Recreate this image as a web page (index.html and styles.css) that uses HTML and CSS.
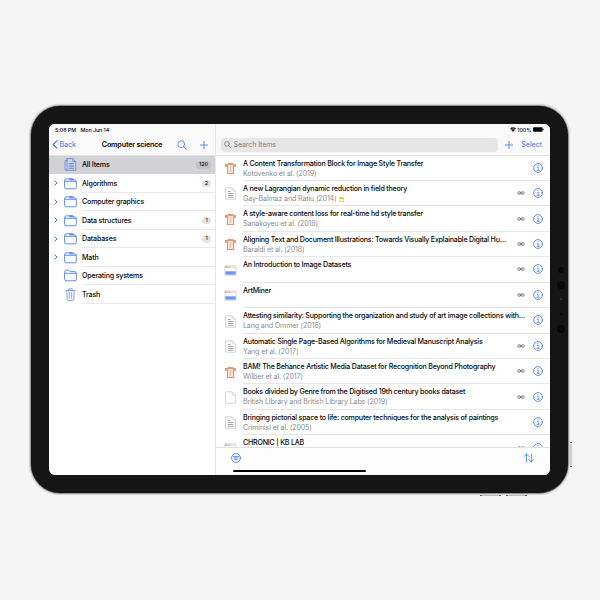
FILE: index.html
```
<!DOCTYPE html>
<html lang="en">
<head>
<meta charset="utf-8">
<title>Library</title>
<link rel="stylesheet" href="styles.css">
</head>
<body>
<svg class="defs" width="0" height="0" aria-hidden="true">
  <symbol id="folder" viewBox="0 0 13 13"><path d="M.8 4.2V2.5Q.8 1.2 2 1.2h2.6l1.4 1.4h4.8q1.2 0 1.2 1.2v.4M.7 4.3h11.6v6.2q0 1.3-1.3 1.3H2Q.7 11.8.7 10.5z"/></symbol>
  <symbol id="folders" viewBox="0 0 13 13"><path d="M.8 4.3V3Q.8 1.9 2 1.9h2.6l1.3 1h5q1.1 0 1.1 1.4M.7 4.3h11.6v6.2q0 1.3-1.3 1.3H2Q.7 11.8.7 10.5z"/><path d="M4.2 1h4.3l2 1.9H6.6z" fill="#6a93f0" stroke="none"/></symbol>
  <symbol id="allitems" viewBox="0 0 13 13"><path d="M3 .6h5.8l3 3v8.8H2.4Q1 12.4 1 11V2.6h2M3 .6v10.6q0 1.2-.8 1.2M8.8.8v2.8h2.8M5 5.4h4.8M5 7.1h4.8M5 8.8h4.8M5 10.5h4.8" stroke-width=".65"/></symbol>
  <symbol id="trash" viewBox="0 0 13 13"><path d="M2 2.5h9M4.8 2.3V.8h3.4v1.5M2.8 2.6l.4 8.7q.1 1.1 1 1.1h4.6q.9 0 1-1.1l.4-8.7M5.3 4.5v6M7.7 4.5v6" stroke-width=".7"/></symbol>
  <symbol id="chev" viewBox="0 0 4 6"><path d="M.8.8L3 3 .8 5.2"/></symbol>
  <symbol id="plus" viewBox="0 0 8 8"><path d="M4 .2v7.6M.2 4h7.6"/></symbol>
  <symbol id="search" viewBox="0 0 10 10"><circle cx="4.2" cy="4.2" r="3.4"/><path d="M6.7 6.7l2.7 2.7"/></symbol>
  <symbol id="artwork" viewBox="0 0 13 13"><path d="M1 2h2.6V1h5.8v1H12v3H1z" fill="#e59a78"/><path d="M3 5h1.1v6H3zM8.9 5H10v6H8.9zM2.8 11h7.4v1.1H2.8z" fill="#e39673"/><path d="M4.1 3h4.8v8H4.1z" fill="#fae4da"/><path d="M6 4h1v6H6z" fill="#efb9a0"/></symbol>
  <symbol id="paper" viewBox="0 0 13 13"><path d="M1.6.8h6.6l3.2 3.2v8.2H1.6z" fill="#fff" stroke="#c6c6c6" stroke-width=".8"/><path d="M8.2.8V4h3.2" fill="none" stroke="#ccc" stroke-width=".6"/><path d="M3.8 4.5h2.7M3.8 6.5h5.6M3.8 8.5h5.6M3.8 10.3h5.6" stroke="#888" stroke-width=".75"/></symbol>
  <symbol id="book" viewBox="0 0 13 13"><path d="M1.6.8h6.6l3.2 3.2v8.2H1.6zM8.2.8V4h3.2" fill="#fff" stroke="#cacaca" stroke-width=".8"/></symbol>
  <symbol id="web" viewBox="0 0 13 13"><path d="M.9 1.8h11.2v9.8H.9z" fill="#fff" stroke="#d4d4d4" stroke-width=".8"/><path d="M6 2.2h5.7v2H6z" fill="#e3e3e3"/><path d="M1.2 2.3h1.5v1.6H1.2z" fill="#f2857e"/><path d="M2.9 2.3h1.5v1.6H2.9z" fill="#f1c876"/><path d="M4.6 2.3h1.5v1.6H4.6z" fill="#8ad481"/><path d="M1.3 7.3h10.4v3.4H1.3z" fill="#6c98f5"/></symbol>
  <symbol id="info" viewBox="0 0 10 10"><circle cx="5" cy="5" r="4.4"/><path d="M4.2 4.4h1v2.9M4 7.3h2.2M4.8 2.7h.5" stroke-width=".75"/></symbol>
  <symbol id="links" viewBox="0 0 8 4"><circle cx="2.3" cy="2" r="1.45"/><circle cx="5.7" cy="2" r="1.45"/><path d="M1.8 2h4.4"/></symbol>
</svg>

<div class="scene">
<div class="device">
  <div class="screen">
    <aside class="sidebar">
      <div class="status">5:08 PM<span>Mon Jun 14</span></div>
      <div class="nav">
        <a class="back"><svg class="ic" width="6" height="9" viewBox="0 0 6 9"><path d="M4.9.8L1.2 4.5l3.7 3.7" stroke-width="1.2"/></svg>Back</a>
        <h1>Computer science</h1>
        <svg class="ic find" width="10" height="10"><use href="#search"/></svg>
        <svg class="ic" width="8" height="8"><use href="#plus"/></svg>
      </div>
      <ul class="folders">
        <li class="active"><i></i><svg class="ic" width="13" height="13"><use href="#allitems"/></svg><div>All Items<b>120</b></div></li>
        <li><svg class="ic chev" width="4" height="6"><use href="#chev"/></svg><svg class="ic" width="13" height="13"><use href="#folders"/></svg><div>Algorithms<b>2</b></div></li>
        <li><svg class="ic chev" width="4" height="6"><use href="#chev"/></svg><svg class="ic" width="13" height="13"><use href="#folders"/></svg><div>Computer graphics</div></li>
        <li><svg class="ic chev" width="4" height="6"><use href="#chev"/></svg><svg class="ic" width="13" height="13"><use href="#folders"/></svg><div>Data structures<b>1</b></div></li>
        <li><svg class="ic chev" width="4" height="6"><use href="#chev"/></svg><svg class="ic" width="13" height="13"><use href="#folders"/></svg><div>Databases<b>1</b></div></li>
        <li><svg class="ic chev" width="4" height="6"><use href="#chev"/></svg><svg class="ic" width="13" height="13"><use href="#folders"/></svg><div>Math</div></li>
        <li><i></i><svg class="ic" width="13" height="13"><use href="#folder"/></svg><div>Operating systems</div></li>
        <li><i></i><svg class="ic" width="13" height="13"><use href="#trash"/></svg><div>Trash</div></li>
      </ul>
    </aside>
    <main class="library">
      <div class="status right">
        <svg width="6" height="5" viewBox="0 0 6 5"><path d="M0 1.6Q3-1 6 1.6L3 5z" fill="#222"/><path d="M.9 2.5Q3 .8 5.1 2.5" fill="none" stroke="#fff" stroke-width=".4"/></svg>
        <em>100%</em>
        <svg width="11" height="5" viewBox="0 0 11 5"><rect width="9.6" height="4.6" y=".2" rx="1.1"/><path d="M10.1 1.7h.6v1.6h-.6z"/></svg>
      </div>
      <div class="nav">
        <div class="search"><svg class="ic" width="7" height="7" viewBox="0 0 10 10"><circle cx="4.2" cy="4.2" r="3.4"/><path d="M6.7 6.7l2.7 2.7"/></svg>Search Items</div>
        <svg class="ic" width="8" height="8"><use href="#plus"/></svg>
        <a>Select</a>
      </div>
      <div class="items">
        <article><svg width="13" height="13"><use href="#artwork"/></svg><div class="body"><div class="text"><h2>A Content Transformation Block for Image Style Transfer</h2><p>Kotovenko et al. (2019)</p></div><svg class="ic info" width="10" height="10"><use href="#info"/></svg></div></article>
        <article><svg width="13" height="13"><use href="#paper"/></svg><div class="body"><div class="text"><h2>A new Lagrangian dynamic reduction in field theory</h2><p>Gay-Balmaz and Ratiu (2014)<span class="note"></span></p></div><svg class="link" width="8" height="4"><use href="#links"/></svg><svg class="ic info" width="10" height="10"><use href="#info"/></svg></div></article>
        <article><svg width="13" height="13"><use href="#artwork"/></svg><div class="body"><div class="text"><h2>A style-aware content loss for real-time hd style transfer</h2><p>Sanakoyeu et al. (2018)</p></div><svg class="link" width="8" height="4"><use href="#links"/></svg><svg class="ic info" width="10" height="10"><use href="#info"/></svg></div></article>
        <article><svg width="13" height="13"><use href="#artwork"/></svg><div class="body"><div class="text"><h2>Aligning Text and Document Illustrations: Towards Visually Explainable Digital Hu…</h2><p>Baraldi et al. (2018)</p></div><svg class="link" width="8" height="4"><use href="#links"/></svg><svg class="ic info" width="10" height="10"><use href="#info"/></svg></div></article>
        <article><svg width="13" height="13"><use href="#web"/></svg><div class="body"><div class="text"><h2>An Introduction to Image Datasets</h2></div><svg class="link" width="8" height="4"><use href="#links"/></svg><svg class="ic info" width="10" height="10"><use href="#info"/></svg></div></article>
        <article><svg width="13" height="13"><use href="#web"/></svg><div class="body"><div class="text"><h2>ArtMiner</h2></div><svg class="link" width="8" height="4"><use href="#links"/></svg><svg class="ic info" width="10" height="10"><use href="#info"/></svg></div></article>
        <article><svg width="13" height="13"><use href="#paper"/></svg><div class="body"><div class="text"><h2>Attesting similarity: Supporting the organization and study of art image collections with…</h2><p>Lang and Ommer (2018)</p></div><svg class="ic info" width="10" height="10"><use href="#info"/></svg></div></article>
        <article><svg width="13" height="13"><use href="#paper"/></svg><div class="body"><div class="text"><h2>Automatic Single Page-Based Algorithms for Medieval Manuscript Analysis</h2><p>Yang et al. (2017)</p></div><svg class="link" width="8" height="4"><use href="#links"/></svg><svg class="ic info" width="10" height="10"><use href="#info"/></svg></div></article>
        <article><svg width="13" height="13"><use href="#artwork"/></svg><div class="body"><div class="text"><h2>BAM! The Behance Artistic Media Dataset for Recognition Beyond Photography</h2><p>Wilber et al. (2017)</p></div><svg class="link" width="8" height="4"><use href="#links"/></svg><svg class="ic info" width="10" height="10"><use href="#info"/></svg></div></article>
        <article><svg width="13" height="13"><use href="#book"/></svg><div class="body"><div class="text"><h2>Books divided by Genre from the Digitised 19th century books dataset</h2><p>British Library and British Library Labs (2019)</p></div><svg class="link" width="8" height="4"><use href="#links"/></svg><svg class="ic info" width="10" height="10"><use href="#info"/></svg></div></article>
        <article><svg width="13" height="13"><use href="#paper"/></svg><div class="body"><div class="text"><h2>Bringing pictorial space to life: computer techniques for the analysis of paintings</h2><p>Criminisi et al. (2005)</p></div><svg class="ic info" width="10" height="10"><use href="#info"/></svg></div></article>
        <article><svg width="13" height="13"><use href="#web"/></svg><div class="body"><div class="text"><h2>CHRONIC | KB LAB</h2></div><svg class="link" width="8" height="4"><use href="#links"/></svg><svg class="ic info" width="10" height="10"><use href="#info"/></svg></div></article>
      </div>
      <div class="toolbar">
        <svg class="ic" width="10" height="10" viewBox="0 0 10 10"><circle cx="5" cy="5" r="4.4"/><path d="M2.3 3.6h5.4M3 5.1h4M4 6.6h2"/></svg>
        <svg class="ic" width="12" height="10" viewBox="0 0 12 10"><path d="M3.5 9V1M1 3.5L3.5 1 6 3.5M8.3 1v8M5.9 6.5L8.3 9l2.5-2.5"/></svg>
      </div>
    </main>
    <div class="home"></div>
  </div>
  <div class="sensors"><s></s><s class="big"></s><s class="lens"></s><s class="dot"></s><s class="big last"></s></div>
  <div class="power"></div>
  <div class="volume"><s></s><s></s></div>
</div>
</div>
</body>
</html>
```
FILE: styles.css
```
* { box-sizing: border-box; margin: 0; padding: 0; }
body {
  width: 600px; height: 600px; overflow: hidden;
  background: #f5f5f5; color: #080808;
  font-family: Inter, "Liberation Sans", sans-serif;
  font-size: 7px;
}
.defs { position: absolute; }
svg { display: block; flex: none; }
ul { list-style: none; }
.scene { padding: 106px 0 0 30.5px; }
.device {
  position: relative;
  width: 537px; height: 387px;
  padding: 18px 17.5px 18px 18px;
  border-radius: 29px;
  background: #151515;
  box-shadow: 0 0 0 .7px #777, 0 0 1px 1.8px #d5d5d5;
}
.screen {
  position: relative;
  display: flex;
  height: 351px;
  border-radius: 6px;
  overflow: hidden;
  background: #fff;
}
.ic { fill: none; stroke: #457af0; stroke-width: .85; stroke-linecap: round; stroke-linejoin: round; }
.sidebar { width: 167.5px; border-right: 1px solid #e6e6e6; }
.library { flex: 1; min-width: 0; display: flex; flex-direction: column; }
.status {
  height: 11px; padding: 0 0 0 6.5px;
  display: flex; align-items: center; gap: 4.5px;
  background: #f9f9f9; font-size: 5.4px; font-weight: 500; letter-spacing: -.1px;
}
.status.right { justify-content: flex-end; gap: 1.5px; padding-right: 6px; }
.status em { font-style: normal; }
.nav {
  height: 20.5px; display: flex; align-items: center;
  background: #f9f9f9; border-bottom: 1px solid #e2e2e2;
}
.nav a { color: #3f74f0; font-size: 7.2px; letter-spacing: -.08px; }
.sidebar .nav { padding: 0 7px 0 3px; }
.back { display: flex; align-items: center; gap: 2px; width: 50.3px; }
h1 { font-size: 7.2px; font-weight: 600; letter-spacing: -.19px; flex: 1; white-space: nowrap; }
.find { margin-right: 13.5px; }
.folders li { display: flex; align-items: center; height: 18.5px; padding-left: 5px; }
.folders i, .chev { width: 4px; margin-right: 6px; }
.folders .chev { stroke-width: 1; }
.folders div {
  flex: 1; height: 18.5px; margin-left: 5.5px; padding: 1px 4px 0 0;
  display: flex; align-items: center; justify-content: space-between;
  border-bottom: 1px solid #e9e9e9;
  font-size: 7.1px; font-weight: 450; letter-spacing: -.18px; white-space: nowrap;
}
.folders .active { background: #d1d1d6; }
.folders .active div { border-color: #d1d1d6; }
.folders b {
  min-width: 9px; height: 7.5px; padding: 0 3px; border-radius: 4px;
  background: #e3e3e5; font-size: 5.4px; line-height: 7.5px; font-weight: 500; text-align: center; letter-spacing: 0;
}
.folders .active b { background: #c2c2c7; }
.library .nav { padding: 0 8px 0 5px; }
.search {
  width: 276.5px; height: 14px; margin-right: 7.5px; padding-left: 3px;
  display: flex; align-items: center; gap: 2.5px;
  border-radius: 4px; background: #e6e6e8; color: #808084; font-size: 7px; letter-spacing: -.08px;
}
.search .ic { stroke: #77777b; stroke-width: 1.1; }
.library .nav a { margin-left: auto; }
.items { height: 291.3px; overflow: hidden; }
article { display: flex; height: 25.45px; padding-left: 8px; }
article > svg { margin-top: 6.5px; }
.body {
  flex: 1; min-width: 0; margin-left: 6px; padding-right: 6.7px; position: relative;
  display: flex; align-items: center;
  border-bottom: 1px solid #e7e7e7;
}
.text { flex: 1; min-width: 0; height: 25px; padding-top: 3.3px; white-space: nowrap; }
h2 { font-size: 7.1px; line-height: 10px; font-weight: 470; letter-spacing: -.21px; }
p { display: flex; align-items: center; font-size: 7.1px; line-height: 10.5px; color: #8b8b8e; letter-spacing: -.14px; }
.note { width: 5px; height: 5px; margin-left: 2px; background: #fff8dc; border: .5px solid #f3dc7d; border-top: 2px solid #f6c62f; border-radius: 1px; }
.link { fill: none; stroke: #666; stroke-width: .7; margin-right: 8.5px; }
.toolbar {
  flex: 1; padding: 5px 15px 0;
  display: flex; justify-content: space-between; align-items: flex-start;
  background: #fdfdfd; border-top: 1px solid #e0e0e0;
}
.home { position: absolute; left: 184.5px; bottom: 3px; width: 132.5px; height: 2px; border-radius: 1px; background: #000; }
.sensors { position: absolute; left: 526px; top: 161px; width: 9px; display: flex; flex-direction: column; align-items: center; }
.sensors s { width: 6px; height: 6px; border-radius: 50%; background: #090909; }
.sensors .big { width: 8px; height: 8px; margin-top: 8px; }
.sensors .lens { width: 4px; height: 4px; margin-top: 8px; background: #203650; border: 1px solid #111a25; }
.sensors .dot { width: 2px; height: 2px; margin-top: 12px; }
.sensors .last { margin-top: 10px; }
.power { position: absolute; left: 539.5px; top: 336px; width: 1.5px; height: 25px; background: #ccc; border: solid #777; border-width: 1.5px 0; }
.volume { position: absolute; left: 449px; top: 388.5px; display: flex; gap: 5px; }
.volume s { width: 21px; height: 1px; background: #bbb; border: solid #666; border-width: 0 2px; }
```
